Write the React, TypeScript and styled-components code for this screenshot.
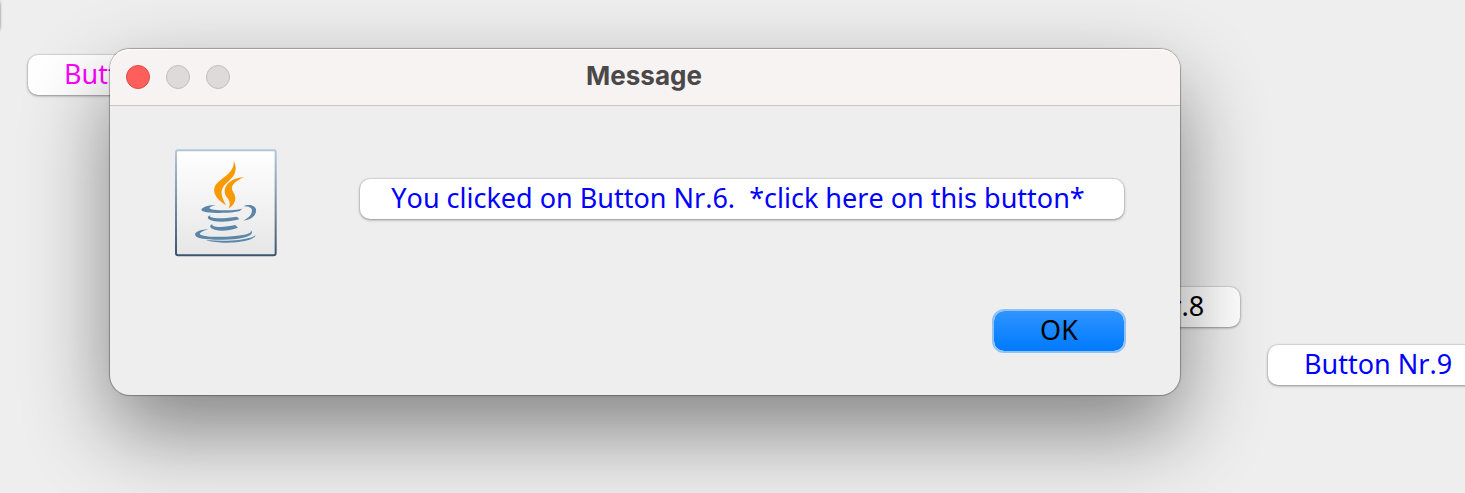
import React from "react";
import styled, { createGlobalStyle } from "styled-components";

const GlobalStyle = createGlobalStyle`
  * { box-sizing: border-box; }
  body { margin: 0; background: #eeeeee; }
  button { font-family: "Noto Sans", "Open Sans", sans-serif; font-kerning: none; }
`;

const Desktop = styled.main`
  position: relative;
  min-height: 100vh;
  overflow: hidden;
  background: #eeeeee;
`;

const PushButton = styled.button<{ $ink?: string }>`
  height: 40px;
  padding: 0 36px 3px;
  border: 0;
  border-radius: 10px;
  background: #ffffff;
  box-shadow: 0 0 1px 1px rgba(0, 0, 0, 0.08), 0 1px 3px rgba(0, 0, 0, 0.35);
  color: ${({ $ink }) => $ink ?? "#000000"};
  font-size: 27px;
  font-weight: 400;
  line-height: 37px;
  white-space: pre;
`;

const CanvasButton = styled(PushButton)<{ $x: number; $y: number }>`
  position: absolute;
  left: ${({ $x }) => $x}px;
  top: ${({ $y }) => $y}px;
  width: 220px;
`;

const MessageButton = styled(PushButton)`
  flex: 1;
  margin-bottom: 8px;
  padding: 0 8px 3px 0;
  text-align: center;
`;

const DefaultButton = styled(PushButton)`
  width: 134px;
  height: 44px;
  border: 2px solid #90c2f7;
  border-radius: 12px;
  background: linear-gradient(#2e94ff, #007aff) padding-box;
  box-shadow: none;
`;

const Dialog = styled.section`
  position: absolute;
  left: 110px;
  right: 285px;
  top: 49px;
  border-radius: 20px;
  background: #eeeeee;
  box-shadow: 0 0 1px 1px rgba(0, 0, 0, 0.3), 0 36px 84px rgba(0, 0, 0, 0.45);
`;

const TitleBar = styled.header`
  display: grid;
  grid-template-columns: 1fr auto 1fr;
  align-items: center;
  height: 57px;
  padding: 0 16px;
  border-bottom: 1px solid #c8c6c6;
  border-radius: 20px 20px 0 0;
  background: #f7f3f2;
  box-shadow: inset 0 1px #fffdfc;
`;

const WindowControls = styled.div`
  display: flex;
  gap: 16px;
`;

const WindowControl = styled.button<{ $fill: string; $edge: string }>`
  width: 24px;
  height: 24px;
  padding: 0;
  border: 1px solid ${({ $edge }) => $edge};
  border-radius: 50%;
  background: ${({ $fill }) => $fill};
`;

const Title = styled.h1`
  margin: 0;
  padding: 0 2px 2px 0;
  color: #4a4848;
  font: 700 26px/32px Inter, sans-serif;
`;

const MessageRow = styled.div`
  display: flex;
  align-items: center;
  gap: 83px;
  padding: 43px 56px 0 65px;
`;

const Actions = styled.footer`
  display: flex;
  justify-content: flex-end;
  padding: 52px 54px 42px;
`;

const JavaIcon = () => (
  <svg width="102" height="108" viewBox="30 27 306 324" role="img" aria-label="Java">
    <defs>
      <linearGradient id="paper" x1="0" y1="0" x2="0" y2="1">
        <stop offset="0" stopColor="#ffffff" />
        <stop offset="1" stopColor="#e6e6e6" />
      </linearGradient>
      <linearGradient id="frame" x1="0" y1="0" x2="0" y2="1">
        <stop offset="0" stopColor="#b2c6dc" />
        <stop offset="0.5" stopColor="#7890a6" />
        <stop offset="1" stopColor="#3b556e" />
      </linearGradient>
    </defs>
    <rect x="33" y="31" width="299" height="315" rx="6" fill="url(#paper)" stroke="url(#frame)" strokeWidth="6" />
    <g fill="#f79a00">
      <path d="M206 62C222 94 204 112 184 130C164 149 166 165 183 196C158 180 144 163 148 144C155 116 211 104 206 62Z" />
      <path d="M237 111C210 124 198 135 201 148C205 160 214 167 210 182C207 193 200 200 191 205C198 189 193 182 185 171C170 150 184 116 237 111Z" />
    </g>
    <g fill="#5b86a8">
      <path d="M109 209C112 202 130 195 152 196C135 200 128 205 139 208C160 213 211 211 232 206L224 213C190 222 108 220 109 209Z" />
      <path d="M235 199C250 191 270 195 273 208C276 226 257 241 234 242C253 233 264 219 260 208C256 200 247 200 235 199Z" />
      <path d="M137 226C131 230 138 233 149 234C171 236 196 233 216 230L223 238C198 245 166 248 145 243C124 239 125 229 137 226Z" />
      <path d="M143 251C138 255 144 258 153 260C171 262 192 259 211 255L219 263C197 271 170 275 152 270C132 264 132 256 143 251Z" />
      <path d="M130 268C114 272 99 280 107 284C119 291 168 292 203 289C242 286 262 281 257 271C270 281 251 292 220 296C177 301 113 301 96 291C79 280 103 268 130 268Z" />
      <path d="M272 285C270 301 218 309 175 308C155 307 132 305 123 300C159 303 197 303 226 299C249 296 266 292 272 285Z" />
    </g>
  </svg>
);

export default function App() {
  return (
    <>
      <GlobalStyle />
      <Desktop>
        <CanvasButton $x={-220} $y={-5} aria-label="Button" />
        <CanvasButton $x={28} $y={55} $ink="#ff00ff">Button Nr.1</CanvasButton>
        <CanvasButton $x={1020} $y={287}>Button Nr.8</CanvasButton>
        <CanvasButton $x={1268} $y={345} $ink="#0000ff">Button Nr.9</CanvasButton>
        <Dialog role="dialog" aria-labelledby="dialog-title">
          <TitleBar>
            <WindowControls>
              <WindowControl $fill="#ff5f5a" $edge="#e14a45" aria-label="Close" />
              <WindowControl $fill="#dedad9" $edge="#c1bebd" aria-label="Minimize" />
              <WindowControl $fill="#dedad9" $edge="#c1bebd" aria-label="Zoom" />
            </WindowControls>
            <Title id="dialog-title">Message</Title>
          </TitleBar>
          <MessageRow>
            <JavaIcon />
            <MessageButton $ink="#0000ff">{"You clicked on Button Nr.6.  *click here on this button*"}</MessageButton>
          </MessageRow>
          <Actions>
            <DefaultButton>OK</DefaultButton>
          </Actions>
        </Dialog>
      </Desktop>
    </>
  );
}
